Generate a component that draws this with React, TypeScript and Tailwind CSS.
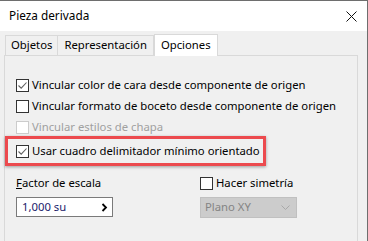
import React from 'react';

const font = { fontFamily: '"Noto Sans", "Liberation Sans", sans-serif' };

function Check({ checked = false, disabled = false }: { checked?: boolean; disabled?: boolean }) {
  return (
    <span
      className={`w-[13px] h-[13px] shrink-0 border flex items-center justify-center bg-white ${
        disabled ? 'border-[#cccccc]' : 'border-[#333333]'
      }`}
    >
      {checked && (
        <svg width="11" height="11" viewBox="0 0 11 11">
          <path d="M1.5 5.5 L4.2 8.2 L9.5 2.5" fill="none" stroke="#606060" strokeWidth="1.1" />
        </svg>
      )}
    </span>
  );
}

function Row({ label, checked, disabled }: { label: string; checked?: boolean; disabled?: boolean }) {
  return (
    <div className="flex items-center gap-[3px] h-[21px] whitespace-nowrap">
      <Check checked={checked} disabled={disabled} />
      <span className={disabled ? 'text-[#a0a0a0]' : 'text-black'}>{label}</span>
    </div>
  );
}

export default function App() {
  return (
    <div
      className="w-[368px] h-[241px] bg-[#f0f0f0] border-r border-t border-[#6e6e6e] flex flex-col text-[11.3px] overflow-hidden"
      style={font}
    >
      {/* Title bar */}
      <div className="h-[30px] bg-white flex items-center justify-between pl-[9px] pr-[10px] shrink-0">
        <span className="text-black text-[11.8px]">Pieza derivada</span>
        <svg width="11" height="11" viewBox="0 0 11 11">
          <path d="M0.5 0.5 L10.5 10.5 M10.5 0.5 L0.5 10.5" stroke="#111" strokeWidth="1" />
        </svg>
      </div>

      {/* Tabs */}
      <div className="flex items-end pl-[5px] pt-[2px] h-[24px] shrink-0 whitespace-nowrap">
        <div className="h-[20px] px-[5px] border border-b-0 border-[#d9d9d9] flex items-center text-black">Objetos</div>
        <div className="h-[20px] px-[6px] border border-l-0 border-b-0 border-[#d9d9d9] flex items-center text-black">
          Representación
        </div>
        <div className="h-[22px] px-[6px] bg-white border border-b-0 border-[#d9d9d9] flex items-center text-black -mb-px relative">
          Opciones
        </div>
      </div>

      {/* Panel */}
      <div className="flex-1 ml-[4px] mr-[9px] border border-[#d9d9d9] border-b-0 pt-[19px] pl-[11px]">
        <Row label="Vincular color de cara desde componente de origen" checked />
        <Row label="Vincular formato de boceto desde componente de origen" />
        <Row label="Vincular estilos de chapa" disabled />
        <div className="-ml-[11px] mr-[91px] mt-[-2px] border-[3px] border-[#ec4a4e] shadow-[0_1px_3px_rgba(0,0,0,0.35)] pl-[8px] h-[30px] flex items-center">
          <Row label="Usar cuadro delimitador mínimo orientado" checked />
        </div>

        <div className="flex mt-[8px] whitespace-nowrap">
          <div className="w-[184px] flex flex-col">
            <span className="h-[18px] leading-[18px] text-black">
              <span className="underline">F</span>actor de escala
            </span>
            <div className="mt-[5px] w-[97px] h-[20px] border border-[#7a7a7a] bg-white flex items-center">
              <span className="flex-1 pl-[5px] text-[#1b1b6b]">1,000 su</span>
              <span className="w-[16px] h-full flex items-center justify-center">
                <svg width="7" height="9" viewBox="0 0 7 9">
                  <path d="M1.5 1 L5 4.5 L1.5 8" fill="none" stroke="#000" strokeWidth="1.8" />
                </svg>
              </span>
            </div>
          </div>
          <div className="flex flex-col">
            <div className="flex items-center gap-[3px] h-[18px]">
              <Check />
              <span className="text-black">Hacer simetría</span>
            </div>
            <div className="mt-[5px] w-[97px] h-[21px] bg-[#cccccc] border border-[#c0c0c0] flex items-center justify-between pl-[4px] pr-[6px]">
              <span className="text-[#848484]">Plano XY</span>
              <svg width="9" height="6" viewBox="0 0 9 6">
                <path d="M0.5 0.5 L4.5 4.5 L8.5 0.5" fill="none" stroke="#a8a8a8" strokeWidth="1" />
              </svg>
            </div>
          </div>
        </div>
      </div>
    </div>
  );
}
